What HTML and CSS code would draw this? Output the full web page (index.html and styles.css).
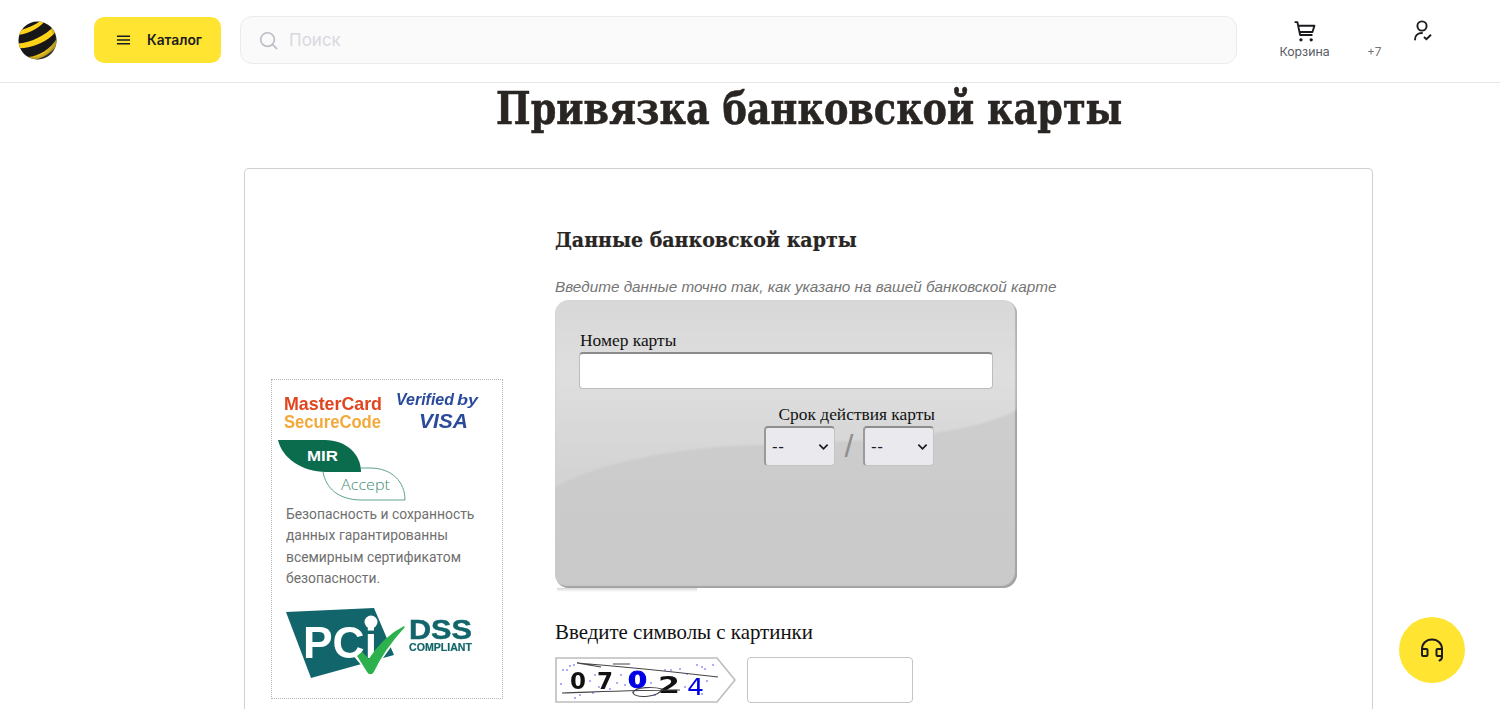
FILE: index.html
```html
<!DOCTYPE html>
<html lang="ru">
<head>
<meta charset="utf-8">
<title>Привязка банковской карты</title>
<link rel="stylesheet" href="styles.css">
</head>
<body>
<header class="topbar">
  <svg class="logo" viewBox="0 0 40 40" aria-label="logo">
    <defs>
      <clipPath id="ball"><circle cx="20" cy="20" r="19.5"/></clipPath>
      <radialGradient id="shade" cx=".4" cy=".4" r=".62"><stop offset=".75" stop-color="#000" stop-opacity="0"/><stop offset="1" stop-color="#555" stop-opacity=".55"/></radialGradient>
    </defs>
    <g clip-path="url(#ball)">
      <rect width="40" height="40" fill="#17171a"/>
      <path d="M1 14C11 13 20 8 27 1L23 0C17 4 9 8 3 9Z" fill="#ffd21a"/>
      <path d="M0 23C13 22 28 15 37 5L40 10C31 21 15 28 1 28Z" fill="#ffd21a"/>
      <path d="M10 37C22 36 33 29 40 18V25C34 33 25 38 17 40Z" fill="#ffd21a"/>
      <circle cx="20" cy="20" r="20" fill="url(#shade)"/>
    </g>
  </svg>
  <button class="catalog">
    <svg class="burger" viewBox="0 0 16 10"><path d="M1 1H15M1 5H15M1 9H15" stroke="#1b1b1f" stroke-width="1.6"/></svg>
    <span>Каталог</span>
  </button>
  <div class="search">
    <svg class="search-icon" viewBox="0 0 20 20"><circle cx="9" cy="9" r="7.2" fill="none" stroke="#bcbcc6" stroke-width="1.7"/><path d="M14.4 14.4L18.6 18.6" stroke="#bcbcc6" stroke-width="1.7" stroke-linecap="round"/></svg>
    <span class="placeholder">Поиск</span>
  </div>
  <nav class="tools">
    <div class="tool cart">
      <svg class="tool-icon" viewBox="0 0 22 22"><path d="M1.5 2H4.2L6.8 14.4H18.6M5.2 5.5H20.5L18.6 11.5H6.2" fill="none" stroke="#1b1b1f" stroke-width="1.8" stroke-linejoin="round"/><circle cx="7.6" cy="19" r="1.6" fill="#1b1b1f"/><circle cx="17.4" cy="19" r="1.6" fill="#1b1b1f"/></svg>
      <span class="cart-label">Корзина</span>
    </div>
    <span class="phone">+7</span>
    <svg class="profile" viewBox="0 0 20 22"><circle cx="9" cy="6" r="4.6" fill="none" stroke="#1b1b1f" stroke-width="1.9"/><path d="M2 19.5C2 15.5 5 13 9 13" fill="none" stroke="#1b1b1f" stroke-width="1.9" stroke-linecap="round"/><path d="M11 17L13.4 19.3L18 14.8" fill="none" stroke="#1b1b1f" stroke-width="1.9"/></svg>
  </nav>
</header>

<main class="page">
  <h1 class="title">Привязка банковской карты</h1>
  <section class="panel">
    <aside class="secure">
      <svg class="marks" viewBox="0 0 204 60">
        <text x="0" y="30" class="mc-top" textLength="98" lengthAdjust="spacingAndGlyphs">MasterCard</text>
        <text x="0" y="48" class="mc-bottom" textLength="97" lengthAdjust="spacingAndGlyphs">SecureCode</text>
        <text x="112" y="25" class="visa-top" textLength="58" lengthAdjust="spacingAndGlyphs">Verified</text>
        <text x="173" y="25" class="visa-by" textLength="21" lengthAdjust="spacingAndGlyphs">by</text>
        <text x="135" y="48" class="visa-bottom" textLength="49" lengthAdjust="spacingAndGlyphs">VISA</text>
      </svg>
      <svg class="mir" viewBox="0 0 130 62">
        <path d="M0 0H47C68 0 83 14 83 32H48C24 32 4 18 0 0Z" fill="#0b6b4d"/>
        <path d="M45 32C48 48 60 60 84 60H127C127 42 114 28 92 28H83" fill="none" stroke="#5ea28c" stroke-width="1"/>
        <text x="29" y="21" class="mir-name" textLength="31" lengthAdjust="spacingAndGlyphs">MIR</text>
        <text x="63" y="50" class="mir-accept" textLength="49" lengthAdjust="spacingAndGlyphs">Accept</text>
      </svg>
      <p class="secure-text">Безопасность и сохранность данных гарантированны всемирным сертификатом безопасности.</p>
      <svg class="pci" viewBox="0 0 190 75">
        <path d="M0 6L88 2L108 49L25 72Z" fill="#12666b"/>
        <text x="17" y="52" class="pci-name" textLength="74" lengthAdjust="spacingAndGlyphs">PCi</text>
        <circle cx="85" cy="16" r="6.5" fill="#fff"/>
        <path d="M70 49L84 66L114 24" fill="none" stroke="#fff" stroke-width="5"/>
        <path d="M72 50L76 47L83 54C92 40 104 28 118 21C106 34 95 49 87 66C86 68 83 68 82 66Z" fill="#2db14c" stroke="#2db14c" stroke-width="1.5" stroke-linejoin="round"/>
        <text x="123" y="33" class="pci-dss" textLength="63" lengthAdjust="spacingAndGlyphs">DSS</text>
        <text x="123" y="45" class="pci-comp" textLength="63" lengthAdjust="spacingAndGlyphs">COMPLIANT</text>
      </svg>
    </aside>
    <div class="form">
      <h2 class="form-title">Данные банковской карты</h2>
      <p class="hint">Введите данные точно так, как указано на вашей банковской карте</p>
      <div class="card">
        <svg class="gloss" viewBox="0 0 462 288" preserveAspectRatio="none">
          <defs><linearGradient id="sheen" x1="0" y1="0" x2="0" y2="1"><stop offset="0" stop-color="#fff" stop-opacity=".18"/><stop offset=".4" stop-color="#fff" stop-opacity=".34"/><stop offset="1" stop-color="#fff" stop-opacity=".14"/></linearGradient></defs>
          <path class="sheen" d="M0 187C40 165 110 148 200 145C300 142 410 138 462 110V14Q462 0 448 0H14Q0 0 0 14Z" fill="url(#sheen)"/>
        </svg>
        <label class="field-label number-label">Номер карты</label>
        <div class="number-input"></div>
        <div class="expiry">
          <label class="field-label">Срок действия карты</label>
          <div class="expiry-row">
            <div class="select"><span>--</span><svg class="chev" viewBox="0 0 12 8"><path d="M1.5 1.5L6 6L10.5 1.5" fill="none" stroke="#1b1b1f" stroke-width="1.9"/></svg></div>
            <span class="slash">/</span>
            <div class="select"><span>--</span><svg class="chev" viewBox="0 0 12 8"><path d="M1.5 1.5L6 6L10.5 1.5" fill="none" stroke="#1b1b1f" stroke-width="1.9"/></svg></div>
          </div>
        </div>
      </div>
      <div class="card-shadow"></div>
      <label class="field-label captcha-label">Введите символы с картинки</label>
      <div class="captcha-row">
        <svg class="captcha" viewBox="0 0 182 46">
          <path d="M1 1H162L180 23L162 45H1Z" fill="#fff" stroke="#bdbdbd" stroke-width="1.6"/>
          <g fill="#5a5aff" opacity=".65"><circle cx="8" cy="13" r="1"/><circle cx="12" cy="13" r="1"/><circle cx="15" cy="9" r="1"/><circle cx="19" cy="8" r="1"/><circle cx="6" cy="27" r="1"/><circle cx="35" cy="24" r="1"/><circle cx="40" cy="18" r="1"/><circle cx="44" cy="30" r="1"/><circle cx="55" cy="32" r="1"/><circle cx="62" cy="26" r="1"/><circle cx="70" cy="28" r="1"/><circle cx="66" cy="18" r="1"/><circle cx="78" cy="35" r="1"/><circle cx="96" cy="26" r="1"/><circle cx="110" cy="13" r="1"/><circle cx="116" cy="13" r="1"/><circle cx="125" cy="12" r="1"/><circle cx="132" cy="17" r="1"/><circle cx="142" cy="8" r="1"/><circle cx="150" cy="12" r="1"/><circle cx="158" cy="8" r="1"/><circle cx="147" cy="10" r="1"/><circle cx="152" cy="24" r="1"/><circle cx="147" cy="37" r="1"/><circle cx="130" cy="30" r="1"/><circle cx="25" cy="38" r="1"/><circle cx="38" cy="36" r="1"/><circle cx="20" cy="41" r="1"/><circle cx="100" cy="38" r="1"/></g>
          <text x="15" y="32" class="cap-d" textLength="16" lengthAdjust="spacingAndGlyphs">0</text>
          <text x="42" y="32" class="cap-d" textLength="16" lengthAdjust="spacingAndGlyphs">7</text>
          <text x="73" y="31" class="cap-b" textLength="19" lengthAdjust="spacingAndGlyphs">0</text>
          <text x="103" y="36" class="cap-d" textLength="22" lengthAdjust="spacingAndGlyphs">2</text>
          <text x="132" y="38" class="cap-b4" textLength="17" lengthAdjust="spacingAndGlyphs">4</text>
          <path d="M22 6C60 9 120 15 163 20M22 6L46 10M58 7H75M7 36C40 35 80 33 125 33M78 36C80 29 100 30 107 32C104 40 82 42 78 36Z" fill="none" stroke="#444" stroke-width="1.1"/>
        </svg>
        <div class="captcha-input"></div>
      </div>
    </div>
  </section>
</main>

<button class="chat" aria-label="Чат">
  <svg viewBox="0 0 26 26"><path d="M3 14V12C3 6.5 7.2 2.5 13 2.5S23 6.5 23 12V14M23 19V20C23 22 22 23 20.5 23.5" fill="none" stroke="#1b1b1f" stroke-width="2" stroke-linecap="round"/><rect x="3" y="12" width="5.5" height="7" rx="1" fill="none" stroke="#1b1b1f" stroke-width="2"/><rect x="17.5" y="12" width="5.5" height="7" rx="1" fill="none" stroke="#1b1b1f" stroke-width="2"/></svg>
</button>
</body>
</html>
```

FILE: styles.css
```css
* { box-sizing: border-box; }
html, body { margin: 0; height: 723px; overflow: hidden; background: #fff; }
body { font-family: "Liberation Sans", Arial, sans-serif; color: #1b1b1f; position: relative; }
svg { display: block; }
button { border: 0; padding: 0; font: inherit; color: inherit; }

.topbar { height: 83px; border-bottom: 1px solid #e6e6e8; display: flex; align-items: flex-start; padding: 16px 0 0 18px; }
.logo { width: 39px; height: 39px; margin-top: 5px; }
.catalog { width: 127px; height: 46px; margin: 1px 0 0 37px; background: #ffe431; border-radius: 10px; display: flex; align-items: center; padding-left: 22px; gap: 16px; font-family: Inter, sans-serif; font-size: 13.8px; font-weight: 600; }
.burger { width: 15px; height: 10px; }
.search { width: 997px; height: 48px; margin-left: 19px; border: 1px solid #ebebef; border-radius: 12px; background: #fafafb; display: flex; align-items: center; padding-left: 18px; gap: 11px; }
.search-icon { width: 19px; height: 19px; }
.placeholder { font-family: Inter, sans-serif; font-size: 17px; color: #d8d8de; }
.tools { display: flex; align-items: flex-start; }
.tool { display: flex; flex-direction: column; align-items: center; }
.cart { width: 51px; margin-left: 42px; margin-top: 4px; gap: 1px; }
.tool-icon { width: 23px; height: 23px; }
.cart-label { font-family: Inter, sans-serif; font-size: 12.3px; color: #555a63; line-height: 16px; }
.phone { font-family: Inter, sans-serif; font-size: 12px; color: #777; margin: 29px 0 0 37px; line-height: 14px; }
.profile { width: 20px; height: 22px; margin: 4px 0 0 32px; }

.page { display: flex; flex-direction: column; align-items: center; }
.title { margin: 0 0 0 118px; height: 85px; font-family: "DejaVu Serif Condensed", "DejaVu Serif", serif; font-size: 44px; line-height: 52px; font-weight: 700; color: #282523; white-space: nowrap; transform: scaleX(.926); -webkit-text-stroke: .5px #282523; }

.panel { width: 1129px; height: 541px; margin-left: 117px; border: 1px solid #d0d0d0; border-bottom: 0; border-radius: 5px 5px 0 0; background: #fff; display: flex; align-items: flex-start; }
.secure { width: 232px; height: 320px; margin: 210px 0 0 26px; border: 1px dotted #b5b5b5; padding: 0 14px; flex: none; }
.marks { width: 204px; height: 60px; margin-left: -2px; filter: blur(.35px); }
.mc-top { font-family: "Liberation Sans", sans-serif; font-weight: 700; font-size: 19px; fill: #e2441f; }
.mc-bottom { font-family: "Liberation Sans", sans-serif; font-weight: 700; font-size: 19px; fill: #f3a93c; }
.visa-top { font-family: "Liberation Sans", sans-serif; font-weight: 700; font-style: italic; font-size: 16.5px; fill: #2a4b9b; }
.visa-by { font-family: "Liberation Sans", sans-serif; font-weight: 700; font-style: italic; font-size: 14px; fill: #2a4b9b; }
.visa-bottom { font-family: "Liberation Sans", sans-serif; font-weight: 700; font-style: italic; font-size: 21px; fill: #2a4b9b; }
.mir { width: 130px; height: 62px; margin: 0 0 0 -8px; }
.mir-name { font-family: "Liberation Sans", sans-serif; font-size: 14px; font-weight: 700; fill: #fff; }
.mir-accept { font-family: "Open Sans", sans-serif; font-size: 15px; font-weight: 300; fill: #3f8c72; }
.secure-text { margin: 2px 0 0 0; font-family: Roboto, sans-serif; font-size: 13.85px; line-height: 21.3px; color: #6f6f6f; }
.pci { width: 190px; height: 75px; margin-top: 17px; filter: blur(.3px); }
.pci-name { font-family: "Liberation Sans", sans-serif; font-size: 44px; font-weight: 700; fill: #fff; }
.pci-dss { font-family: "Liberation Sans", sans-serif; font-size: 28px; font-weight: 700; fill: #12666b; stroke: #12666b; stroke-width: .5px; }
.pci-comp { font-family: "Liberation Sans", sans-serif; font-size: 10px; font-weight: 700; fill: #12666b; stroke: #12666b; stroke-width: .2px; }

.form { margin-left: 52px; width: 520px; flex: none; }
.form-title { margin: 56px 0 0; font-family: "DejaVu Serif Condensed", "DejaVu Serif", serif; font-size: 21.1px; line-height: 30px; font-weight: 700; color: #282523; white-space: nowrap; -webkit-text-stroke: .2px #282523; }
.hint { margin: 23px 0 0; font-size: 15.3px; line-height: 17px; font-style: italic; color: #757575; white-space: nowrap; }
.card { position: relative; width: 462px; height: 288px; margin-top: 5px; border-radius: 14px; background: linear-gradient(#d0d0d0, #c9c9c9); box-shadow: inset -2px -2px 1px #a3a3a3; padding: 30px 24px 0; overflow: hidden; }
.gloss { position: absolute; left: 0; top: 0; width: 100%; height: 100%; }
.sheen { filter: blur(1px); }
.card > *:not(.gloss) { position: relative; }
.card-shadow { width: 140px; height: 4px; margin-left: 2px; background: linear-gradient(#d8d8d8, #fff); }
.field-label { display: block; font-family: "Liberation Serif", serif; font-size: 17.4px; line-height: 20px; color: #111; white-space: nowrap; }
.number-label { margin-left: 1px; }
.number-input { width: 414px; height: 37px; margin-top: 2px; border-radius: 4px; background: #fff; border: 1px solid #bdbdbd; border-top: 2px solid #8b8b8b; }
.expiry { width: 171px; margin: 15px 0 0 185px; }
.expiry .field-label { text-align: right; }
.expiry-row { display: flex; align-items: center; margin-top: 2px; }
.select { width: 71px; height: 40px; border-radius: 4px; background: #eaeaee; border: 1px solid #c4c4c4; border-top: 2px solid #8d8d8d; border-left: 2px solid #9a9a9a; display: flex; align-items: center; justify-content: space-between; padding: 0 5px 0 6px; font-family: "Liberation Sans", sans-serif; font-size: 17px; }
.select span { letter-spacing: .5px; }
.chev { width: 11px; height: 8px; }
.slash { width: 28px; text-align: center; font-family: "Liberation Sans", sans-serif; font-size: 32px; color: #8f8f8f; line-height: 40px; }
.captcha-label { margin-top: 29px; font-size: 20.9px; line-height: 22px; }
.captcha-row { display: flex; gap: 10px; margin-top: 14px; align-items: flex-start; }
.captcha { width: 182px; height: 46px; filter: blur(.3px); }
.captcha-input { width: 166px; height: 46px; border: 1px solid #c4c4c4; border-radius: 4px; background: #fff; }
.cap-d { font-family: "DejaVu Sans", sans-serif; font-size: 23px; font-weight: 700; fill: #111; }
.cap-b { font-family: "DejaVu Sans", sans-serif; font-size: 23px; font-weight: 700; fill: #0000e6; stroke: #0000e6; }
.cap-b4 { font-family: "DejaVu Sans", sans-serif; font-size: 23px; fill: #0000e6; }

.chat { position: absolute; left: 1399px; top: 617px; width: 66px; height: 66px; border-radius: 50%; background: #ffe431; display: flex; align-items: center; justify-content: center; }
.chat svg { width: 26px; height: 26px; }
```
